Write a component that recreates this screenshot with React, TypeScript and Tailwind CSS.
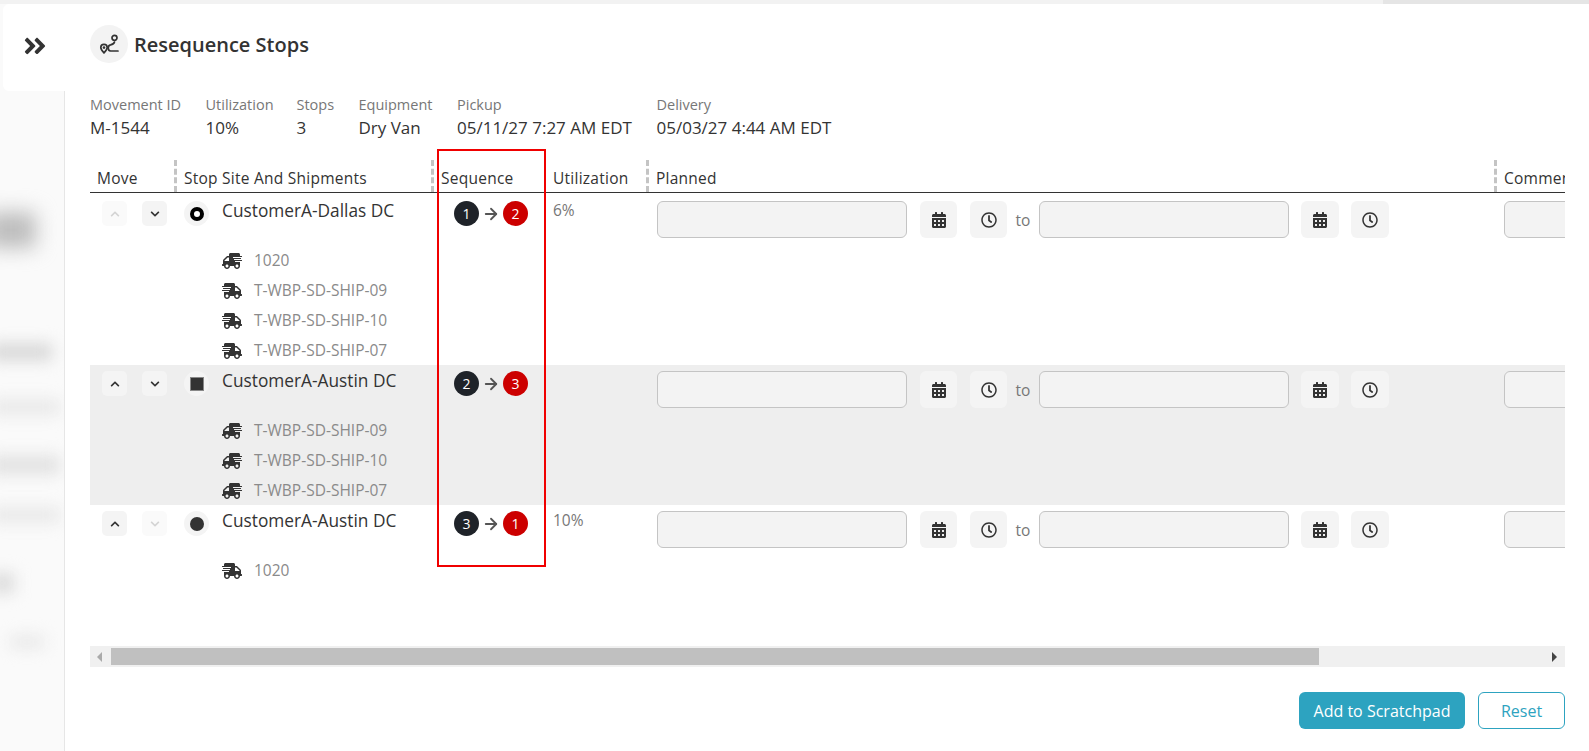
import { FaAngleDoubleRight, FaCalendarAlt, FaChevronDown, FaChevronUp, FaRegClock, FaShippingFast } from "react-icons/fa";
import { ArrowRight } from "lucide-react";

interface Stop {
  name: string;
  marker: "origin" | "square" | "dot";
  from: number;
  to: number;
  utilization?: string;
  canUp: boolean;
  canDown: boolean;
  shipments: { label: string; flip: boolean }[];
  rowClass: string;
}

const COLUMNS = "grid-cols-[84px_257px_113px_102px_848px_71px]";

const STOPS: Stop[] = [
  {
    name: "CustomerA-Dallas DC",
    marker: "origin",
    from: 1,
    to: 2,
    utilization: "6%",
    canUp: false,
    canDown: true,
    rowClass: "h-[172px] pt-[8px] bg-white",
    shipments: [
      { label: "1020", flip: true },
      { label: "T-WBP-SD-SHIP-09", flip: false },
      { label: "T-WBP-SD-SHIP-10", flip: false },
      { label: "T-WBP-SD-SHIP-07", flip: false },
    ],
  },
  {
    name: "CustomerA-Austin DC",
    marker: "square",
    from: 2,
    to: 3,
    canUp: true,
    canDown: true,
    rowClass: "h-[140px] pt-[6px] bg-[#eeeeee]",
    shipments: [
      { label: "T-WBP-SD-SHIP-09", flip: true },
      { label: "T-WBP-SD-SHIP-10", flip: true },
      { label: "T-WBP-SD-SHIP-07", flip: true },
    ],
  },
  {
    name: "CustomerA-Austin DC",
    marker: "dot",
    from: 3,
    to: 1,
    utilization: "10%",
    canUp: true,
    canDown: false,
    rowClass: "h-[141px] pt-[6px] bg-white",
    shipments: [{ label: "1020", flip: false }],
  },
];

const META = [
  { label: "Movement ID", value: "M-1544", width: "w-[115.5px]" },
  { label: "Utilization", value: "10%", width: "w-[91px]" },
  { label: "Stops", value: "3", width: "w-[62px]" },
  { label: "Equipment", value: "Dry Van", width: "w-[98.5px]" },
  { label: "Pickup", value: "05/11/27 7:27 AM EDT", width: "w-[199.5px]" },
  { label: "Delivery", value: "05/03/27 4:44 AM EDT", width: "w-auto" },
];

function Divider() {
  return <span className="absolute left-0 top-[11px] bottom-0 w-[3px] border-l-[3px] border-dashed border-[#c4c4c4]" />;
}

function MoveButton({ up, enabled }: { up: boolean; enabled: boolean }) {
  const Icon = up ? FaChevronUp : FaChevronDown;
  return (
    <button
      className={`flex h-[25px] w-[25px] items-center justify-center rounded-[5px] ${
        enabled ? "bg-[#f4f4f4] text-[#333]" : "bg-[#fafafa] text-[#d4d4d4]"
      }`}
    >
      <Icon size={10} />
    </button>
  );
}

function Marker({ kind }: { kind: Stop["marker"] }) {
  return (
    <span className="flex h-[25px] w-[25px] shrink-0 items-center justify-center rounded-full bg-[#f4f4f4]">
      {kind === "origin" && <span className="h-[14px] w-[14px] rounded-full border-[4px] border-black bg-white" />}
      {kind === "square" && <span className="h-[14px] w-[14px] border border-[#888] bg-[#333]" />}
      {kind === "dot" && <span className="h-[14px] w-[14px] rounded-full bg-[#333]" />}
    </span>
  );
}

function DateInput({ width }: { width: string }) {
  return <div className={`h-[37px] shrink-0 rounded-[6px] border border-[#c4c4c4] bg-[#f3f3f3] ${width}`} />;
}

function IconButton({ kind, className }: { kind: "calendar" | "clock"; className: string }) {
  return (
    <button className={`flex h-[37px] shrink-0 items-center justify-center rounded-[6px] bg-[#f4f4f4] text-[#333] ${className}`}>
      {kind === "calendar" ? <FaCalendarAlt size={16} /> : <FaRegClock size={16} />}
    </button>
  );
}

function StopRow({ stop }: { stop: Stop }) {
  return (
    <div className={`grid ${COLUMNS} ${stop.rowClass}`}>
      <div className="flex gap-[15px] pl-[12px]">
        <MoveButton up enabled={stop.canUp} />
        <MoveButton up={false} enabled={stop.canDown} />
      </div>
      <div>
        <div className="flex items-start gap-[13px] pl-[10px]">
          <Marker kind={stop.marker} />
          <span className="-mt-px h-[21px] text-[17.3px] leading-[22px] font-medium whitespace-nowrap text-[#333]">{stop.name}</span>
        </div>
        <div className="mt-[20px] pl-[48px]">
          {stop.shipments.map((s) => (
            <div key={s.label} className="flex h-[30px] items-center gap-[12px] text-[15.5px] text-[#8a8a8a]">
              <FaShippingFast size={20} className={`text-[#333] ${s.flip ? "-scale-x-100" : ""}`} />
              <span>{s.label}</span>
            </div>
          ))}
        </div>
      </div>
      <div className="flex items-start pl-[23px]">
        <span className="flex h-[25px] w-[25px] items-center justify-center rounded-full bg-[#1f2329] text-[14px] text-white">{stop.from}</span>
        <ArrowRight size={18} strokeWidth={2.4} className="mx-[3px] mt-[4px] text-[#555]" />
        <span className="flex h-[25px] w-[25px] items-center justify-center rounded-full bg-[#cc0000] text-[14px] text-white">{stop.to}</span>
      </div>
      <div className="-mt-[2px] pl-[9px] text-[15.5px] text-[#777]">{stop.utilization}</div>
      <div className="flex items-start pl-[11px]">
        <DateInput width="w-[250px]" />
        <IconButton kind="calendar" className="ml-[13px] w-[37px]" />
        <IconButton kind="clock" className="ml-[13px] w-[37px]" />
        <span className="w-[32px] pt-[8px] text-center text-[15.5px] text-[#777]">to</span>
        <DateInput width="w-[250px]" />
        <IconButton kind="calendar" className="ml-[12px] w-[38px]" />
        <IconButton kind="clock" className="ml-[12px] w-[38px]" />
      </div>
      <div className="pl-[10px]">
        <DateInput width="w-[120px]" />
      </div>
    </div>
  );
}

function Backdrop() {
  return (
    <aside className="h-full w-[65px] shrink-0 overflow-hidden border-r border-[#e6e6e6] bg-[#fafafa] pt-[208px]">
      <div className="-ml-[14px] h-[36px] w-[50px] rounded bg-[#bdbdbd] blur-[10px]" />
      <div className="-ml-[10px] mt-[96px] h-[16px] w-[62px] bg-[#d4d4d4] blur-[8px]" />
      <div className="-ml-[10px] mt-[40px] h-[14px] w-[70px] bg-[#e6e6e6] blur-[8px]" />
      <div className="-ml-[10px] mt-[42px] h-[18px] w-[70px] bg-[#e0e0e0] blur-[8px]" />
      <div className="-ml-[10px] mt-[34px] h-[14px] w-[70px] bg-[#e6e6e6] blur-[8px]" />
      <div className="-ml-[10px] mt-[51px] h-[20px] w-[24px] bg-[#dadada] blur-[8px]" />
      <div className="ml-[10px] mt-[43px] h-[12px] w-[34px] bg-[#e6e6e6] blur-[8px]" />
    </aside>
  );
}

export default function App() {
  return (
    <div className="relative flex h-[751px] w-[1589px] flex-col overflow-hidden font-['Open_Sans',sans-serif] text-[#333]">
      <div className="flex h-[4px] shrink-0">
        <div className="w-[1383px] bg-[#f2f2f2]" />
        <div className="flex-1 bg-[#e5e5e5]" />
      </div>

      <div className="flex min-h-0 flex-1">
        <Backdrop />

        <main className="h-full flex-1 rounded-tr-[4px] bg-white pl-[25px] pr-[24px]">
          <header className="flex h-[81px] items-center gap-[6px] pb-[3px] pt-[2px]">
            <span className="flex h-[38px] w-[38px] items-center justify-center rounded-full bg-[#f3f3f3]">
              <svg width="22" height="22" viewBox="0 0 22 22" fill="none" stroke="#333" strokeWidth="1.7" strokeLinecap="round" className="translate-y-[1px]">
                <circle cx="16.500" cy="3.800" r="2.500" />
                <path d="M16.500 8C16 10 14 10.500 12.500 10.800C9.500 11.300 9.500 16.500 12.500 17H20" />
                <path d="M6 18.800C4.200 17 2.800 15.600 2.800 13.600a3.200 3.200 0 0 1 6.400 0c0 2-1.400 3.400-3.200 5.200z" />
                <circle cx="6" cy="13.600" r="1.300" fill="#333" stroke="none" />
              </svg>
            </span>
            <h1 className="mt-[2px] text-[20px] font-semibold text-[#333]">Resequence Stops</h1>
          </header>

          <dl className="mt-[10px] flex h-[54px]">
            {META.map((m) => (
              <div key={m.label} className={m.width}>
                <dt className="text-[14.5px] leading-[20px] text-[#777]">{m.label}</dt>
                <dd className="mt-[1px] text-[17px] leading-[24px] text-[#333]">{m.value}</dd>
              </div>
            ))}
          </dl>

          <div className="w-[1475px] overflow-hidden">
            <div className={`grid h-[44px] ${COLUMNS} border-b border-[#333] text-[15.5px] font-medium tracking-[0.25px] text-[#333]`}>
              <div className="relative pl-[7px] pt-[18px]">Move</div>
              <div className="relative pl-[10px] pt-[18px]"><Divider />Stop Site And Shipments</div>
              <div className="relative pl-[10px] pt-[18px]"><Divider />Sequence</div>
              <div className="relative pl-[9px] pt-[18px]">Utilization</div>
              <div className="relative pl-[10px] pt-[18px]"><Divider />Planned</div>
              <div className="relative overflow-hidden pl-[10px] pt-[18px]"><Divider />Comments</div>
            </div>
            {STOPS.map((stop, i) => (
              <StopRow key={i} stop={stop} />
            ))}
          </div>

          <div className="flex h-[21px] w-[1475px] items-center bg-[#f0f0f0]">
            <span className="ml-[7px] h-0 w-0 border-y-[5px] border-r-[5px] border-y-transparent border-r-[#aaa]" />
            <div className="ml-[9px] h-[17px] w-[1208px] bg-[#c0c0c0]" />
            <span className="ml-auto mr-[8px] h-0 w-0 border-y-[5px] border-l-[5px] border-y-transparent border-l-[#444]" />
          </div>

          <footer className="mt-[25px] flex w-[1475px] justify-end gap-[13px] text-[16px]">
            <button className="h-[37px] w-[166px] rounded-[6px] bg-[#2da3c0] text-white">Add to Scratchpad</button>
            <button className="h-[37px] w-[87px] rounded-[6px] border border-[#2da3c0] bg-white text-[#2da3c0]">Reset</button>
          </footer>
        </main>
      </div>

      {/* collapse tab sits over the panel edge */}
      <div className="absolute left-[3px] top-[4px] flex h-[87px] w-[63px] items-start rounded-l-[6px] bg-white pl-[19px] pt-[29px] text-[#333]">
        <FaAngleDoubleRight size={26} />
      </div>

      {/* highlight drawn on top of the screenshot */}
      <div className="pointer-events-none absolute left-[437px] top-[149px] h-[418px] w-[109px] border-2 border-[#f00000]" />
    </div>
  );
}
